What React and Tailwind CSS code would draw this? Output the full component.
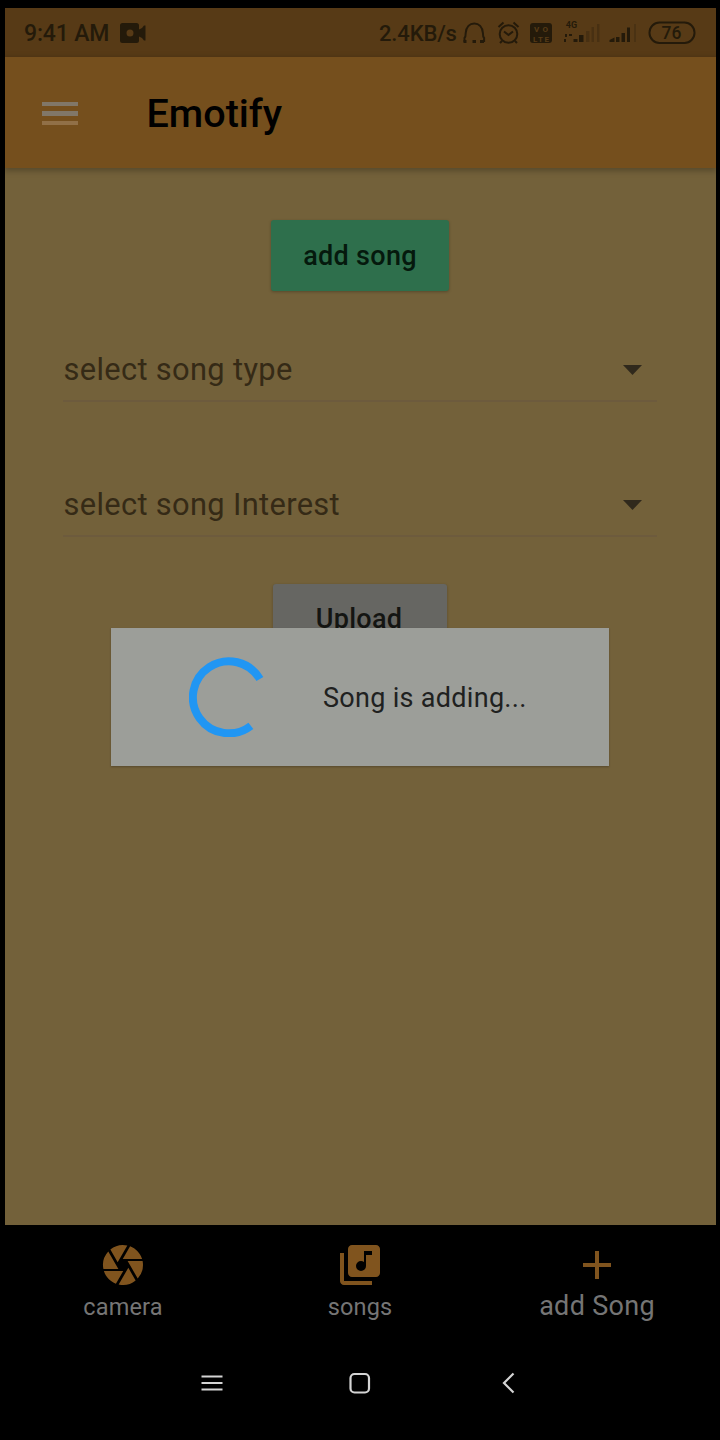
import React from 'react';
import { MdCamera, MdLibraryMusic, MdAdd } from 'react-icons/md';

function StatusBar() {
  return (
    <div className="flex h-[49px] items-center bg-[#573a16] pl-[19.500px] text-[#241a0a]">
      <span className="w-[96px] whitespace-nowrap pt-[2px] text-[23px] leading-[28px] font-medium tracking-[-0.15px]">9:41 AM</span>
      <svg className="h-[20px] w-[26px]" viewBox="0 0 26 20" fill="currentColor">
        <path fillRule="evenodd" d="M2.5 0h14A2.5 2.5 0 0 1 19 2.500v4l3-1.500 2-2.500h1.500v15H24L22 15l-3-1.500v4a2.500 2.500 0 0 1-2.500 2.500h-14A2.500 2.500 0 0 1 0 17.500v-15A2.500 2.500 0 0 1 2.500 0zM10 6.500a3.500 3.500 0 1 0 0 7 3.500 3.500 0 0 0 0-7z" />
      </svg>
      <span className="ml-[233px] w-[82px] whitespace-nowrap pt-[2px] text-[22px] leading-[28px] font-medium tracking-[-0.15px]">2.4KB/s</span>
      <svg className="h-[32px] w-[240px]" viewBox="461 17 240 32" fill="none" stroke="currentColor" strokeWidth="2">
        <path d="M464.500 42v-4c1-1 1.200-2.500 1.200-5 .5-6 4-9.500 8.600-9.500s8.100 3.500 8.600 9.500c0 2.500.2 4 1.200 5v4" />
        <path d="M463.500 41.500h3M472.500 41.500h3.500M480 41.500h4" strokeWidth="3" />
        <circle cx="508.500" cy="34" r="8.800" />
        <path d="M498.500 27l5-4.500M513.500 22.500l5 4.500M504 31.500l4.500 3.500 4.500-3.500M502 41l-2 2M515 41l2 2" />
        <rect x="530" y="23" width="22" height="20" rx="3" fill="currentColor" stroke="none" />
        <g fill="#573a16" stroke="none" fontFamily="Roboto, sans-serif" fontWeight="700" fontSize="8" textAnchor="middle">
          <text x="541" y="31.500" textLength="14">VO</text>
          <text x="541" y="41.500" textLength="16">LTE</text>
        </g>
        <text x="571.500" y="28" textAnchor="middle" fill="currentColor" stroke="none" fontSize="9" fontWeight="700" fontFamily="Roboto, sans-serif">4G</text>
        <g stroke="none" fill="currentColor">
          <path d="M564 39h2v3h-2zM565 34h2v3h-2zM569 34h3v2h-3zM573.500 39h4v3h-4zM579 35h4.500v7H579z" />
          <path d="M586 31h3.500v11H586zM591.500 27h2.500v15h-2.500zM597 24h2.500v18H597z" opacity=".28" />
          <path d="M609.500 40l5-2.500V42h-5zM616 37h3.500v5H616zM621.500 33h3.500v9h-3.500zM627 27.500h3V42h-3z" />
          <path d="M634 24h2v18h-2z" opacity=".25" />
        </g>
        <rect x="649.500" y="22.500" width="45" height="20.500" rx="10" />
        <text x="671.500" y="39" textAnchor="middle" fill="currentColor" stroke="none" fontSize="17.500" fontWeight="500" fontFamily="Roboto, sans-serif">76</text>
      </svg>
    </div>
  );
}

function AppBar() {
  return (
    <header className="relative flex h-[111px] items-center bg-[#754f1d] pl-[37px] shadow-[0_2px_6px_1px_rgba(0,0,0,0.25)]">
      <div className="flex w-[105px] flex-col gap-[5px] pt-[1px]">
        <i className="h-[4px] w-[36px] bg-[#817768]" />
        <i className="h-[5px] w-[36px] bg-[#817768]" />
        <i className="h-[4px] w-[36px] bg-[#917047]" />
      </div>
      <h1 className="whitespace-nowrap pt-[2px] text-[39.5px] leading-[48px] font-medium text-black">Emotify</h1>
    </header>
  );
}

function SelectField({ label }) {
  return (
    <div className="flex h-[64px] w-[594px] items-center justify-between border-b-2 border-[#6d5b3d] pr-[15px] pl-[0.5px]">
      <span className="whitespace-nowrap pt-[1px] text-[30.800px] leading-[40px] tracking-[0.35px] text-[#352a16]">{label}</span>
      <svg className="mt-[2px] h-[10px] w-[19px]" viewBox="0 0 19 10" fill="#30291c">
        <path d="M0 0h19l-9.500 10z" />
      </svg>
    </div>
  );
}

function NavItem({ icon: Icon, label, large }) {
  return (
    <div className="flex flex-1 flex-col items-center pt-[16px]">
      <Icon className="size-[48px] text-[#80541e]" />
      <span className={large ? 'whitespace-nowrap pt-[1px] text-[27px] leading-[32px] tracking-[0.3px] text-[#757575]' : 'whitespace-nowrap pt-[2px] text-[23.5px] leading-[32px] tracking-[0.15px] text-[#757575]'}>{label}</span>
    </div>
  );
}

export default function App() {
  return (
    <div className="relative flex h-[1440px] w-[720px] flex-col bg-black px-[4.500px] pt-[8px] font-['Roboto',sans-serif]">
      <StatusBar />
      <AppBar />
      <main className="flex h-[1057px] flex-col items-center bg-[#73613a] pt-[52px]">
        <button className="h-[71px] w-[178px] rounded-[3px] bg-[#2e6f4c] pt-[1px] text-[27px] font-medium tracking-[0.3px] text-[#05190d] shadow-[0_1px_3px_rgba(0,0,0,0.25)]">add song</button>
        <div className="flex flex-col gap-[71px] pt-[47px]">
          <SelectField label="select song type" />
          <SelectField label="select song Interest" />
        </div>
        <button className="mt-[47px] h-[70px] w-[174px] rounded-[3px] bg-[#666662] pr-[8px] pl-[6px] text-[27px] font-medium tracking-[0.3px] text-[#141512] shadow-[0_1px_3px_rgba(0,0,0,0.25)]">Upload</button>
      </main>
      <nav className="flex h-[115px]">
        <NavItem icon={MdCamera} label="camera" />
        <NavItem icon={MdLibraryMusic} label="songs" />
        <NavItem icon={MdAdd} label="add Song" large />
      </nav>
      <div className="flex h-[86px] items-center justify-center gap-[125px] text-[#d4d4d4]">
        <svg className="h-[24px] w-[24px]" viewBox="0 0 24 24" fill="none" stroke="currentColor" strokeWidth="2.200">
          <path d="M2.500 5.500h21M2.500 12h21M2.500 18.500h21" />
        </svg>
        <svg className="h-[24px] w-[24px]" viewBox="0 0 24 24" fill="none" stroke="currentColor" strokeWidth="2.200">
          <rect x="2.500" y="3" width="18.500" height="18.500" rx="4" />
        </svg>
        <svg className="h-[24px] w-[24px]" viewBox="0 0 24 24" fill="none" stroke="currentColor" strokeWidth="2.200">
          <path d="M16.500 2.500L7 12l9.500 9.500" />
        </svg>
      </div>
      <div role="dialog" className="absolute left-[111px] top-[628px] flex h-[138px] w-[498px] items-center bg-[#9c9e99] pl-[78px] shadow-[0_1px_2px_rgba(0,0,0,0.25)]">
        <svg className="size-[80px]" viewBox="0 0 80 80" fill="none" stroke="#2196f3" strokeWidth="8">
          <path d="M70.900 22A36 36 0 1 0 61.900 68.800" />
        </svg>
        <span className="ml-[54px] whitespace-nowrap pt-[1px] text-[27px] leading-[32px] tracking-[0.3px] text-[#20211f]">Song is adding...</span>
      </div>
    </div>
  );
}
